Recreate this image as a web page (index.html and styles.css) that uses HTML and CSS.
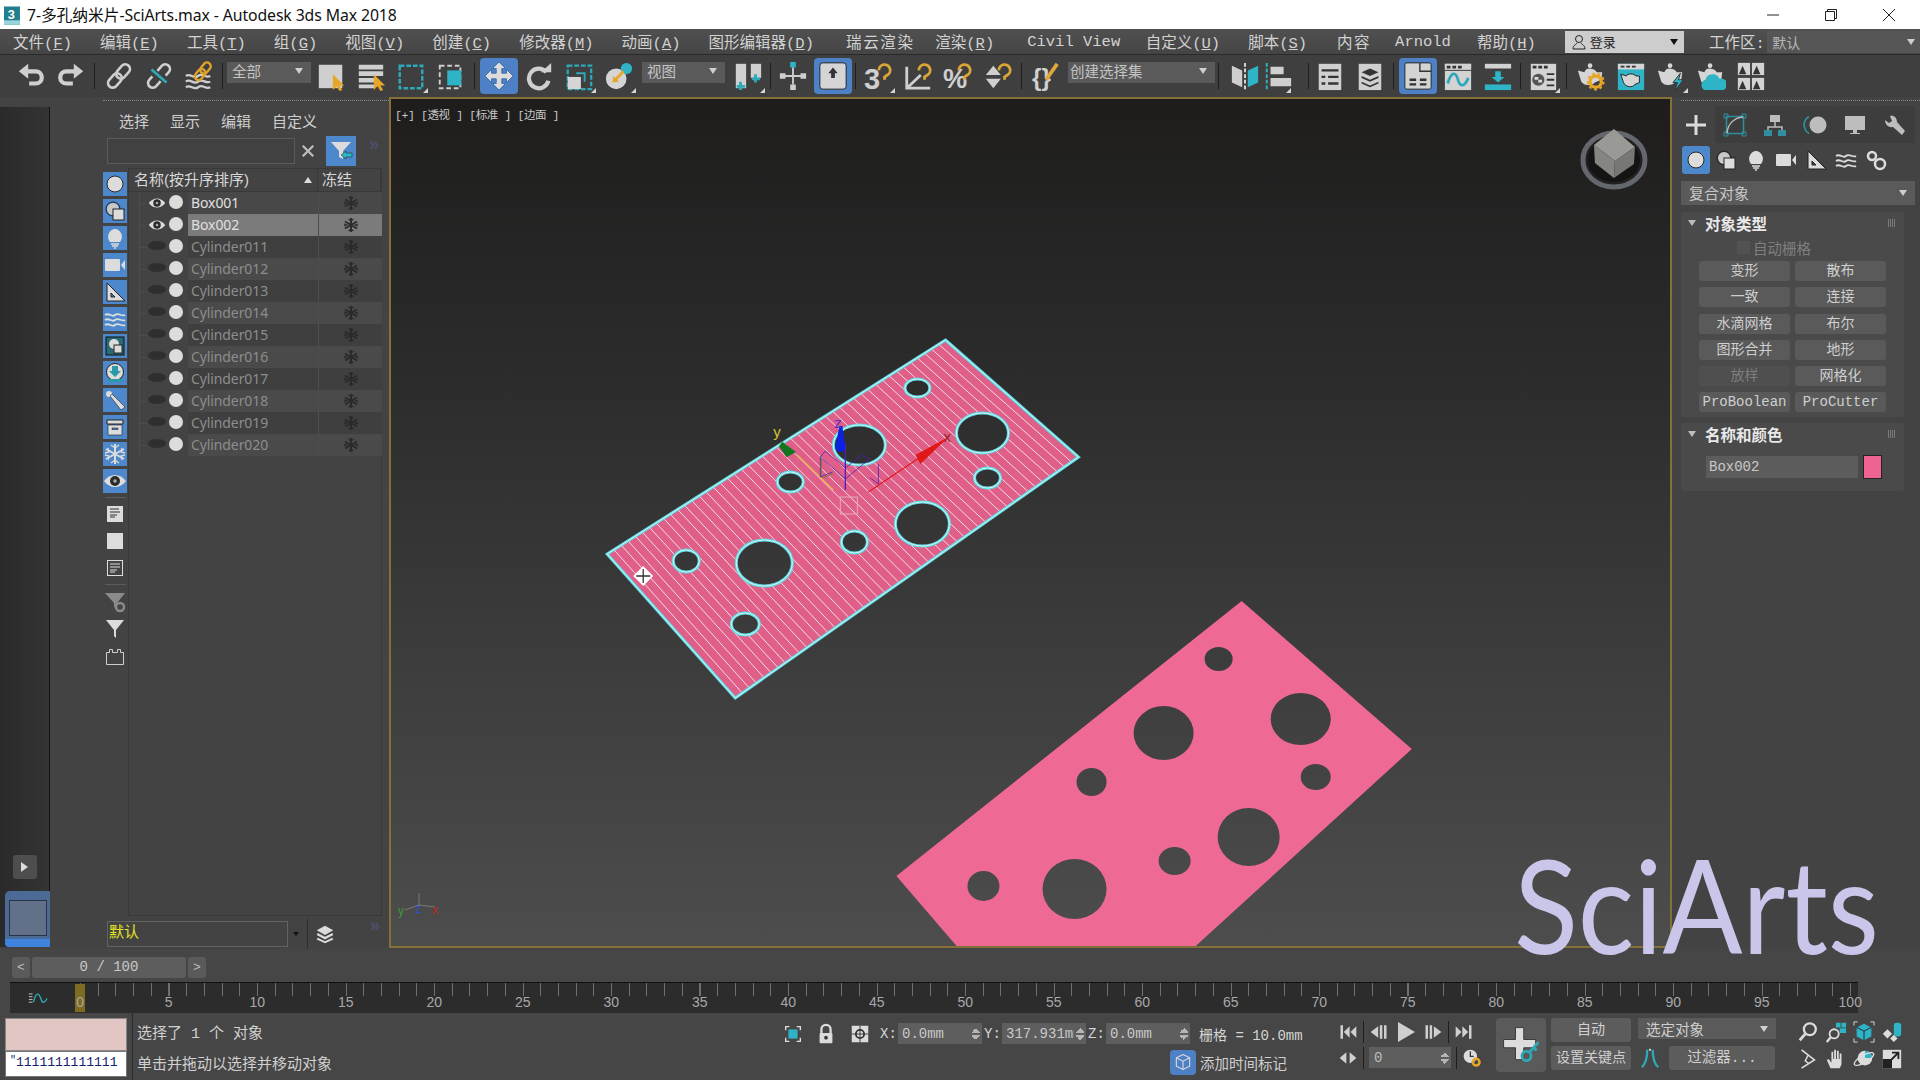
FILE: index.html
```html
<!DOCTYPE html>
<html lang="zh">
<head>
<meta charset="utf-8">
<title>7-多孔纳米片-SciArts.max - Autodesk 3ds Max 2018</title>
<link rel="stylesheet" href="styles.css">
</head>
<body>
<svg class="defs" width="0" height="0">
<defs>
<symbol id="i-undo" viewBox="0 0 32 32"><path d="M10 11h11a6.500 6.500 0 0 1 0 13h-7" fill="none" stroke="#cfcfcf" stroke-width="4.500"/><path d="M13 3 3 11l10 8z" fill="#cfcfcf"/></symbol>
<symbol id="i-redo" viewBox="0 0 32 32"><g transform="matrix(-1 0 0 1 32 0)"><path d="M10 11h11a6.500 6.500 0 0 1 0 13h-7" fill="none" stroke="#cfcfcf" stroke-width="4.500"/><path d="M13 3 3 11l10 8z" fill="#cfcfcf"/></g></symbol>
<symbol id="i-link" viewBox="0 0 32 32"><g transform="rotate(-48 16 16)" fill="none" stroke="#cfcfcf" stroke-width="2.800"><rect x="1" y="11" width="17" height="10" rx="5"/><rect x="14" y="11" width="17" height="10" rx="5"/></g></symbol>
<symbol id="i-unlink" viewBox="0 0 32 32"><g transform="rotate(-48 16 16)" fill="none" stroke="#cfcfcf" stroke-width="2.800"><path d="M11 11H6a5 5 0 0 0 0 10h7"/><path d="M21 21h5a5 5 0 0 0 0-10H19"/></g><path d="M8 9l16 14" stroke="#2ea9b9" stroke-width="3"/></symbol>
<symbol id="i-bind" viewBox="0 0 32 32"><g fill="none" stroke="#cfcfcf" stroke-width="2.400"><path d="M2 16c5-4 8 4 13 0s8 3 13 0"/><path d="M2 22c5-4 8 4 13 0s8 3 13 0"/><path d="M2 28c5-4 8 4 13 0s8 3 13 0"/></g><g transform="rotate(-50 20 11)" fill="none" stroke="#dca22c" stroke-width="2.600"><rect x="9" y="7" width="13" height="8" rx="4"/><rect x="18" y="7" width="13" height="8" rx="4"/></g></symbol>
<symbol id="i-sel" viewBox="0 0 32 32"><rect x="3" y="4" width="25" height="25" fill="#cfcfcf"/><path d="M18 14v17l4-4 3 5 3-1-3-5h5z" fill="#e8a626"/></symbol>
<symbol id="i-selname" viewBox="0 0 32 32"><path d="M3 4h26v5H3zM3 11h26v5H3zM3 18h17v5H3zM3 25h17v4H3z" fill="#cfcfcf"/><path d="M19 14v17l4-4 3 5 3-1-3-5h5z" fill="#e8a626"/></symbol>
<symbol id="i-rect" viewBox="0 0 32 32"><rect x="4" y="5" width="24" height="24" fill="none" stroke="#2ea9b9" stroke-width="2.600" stroke-dasharray="5 2"/></symbol>
<symbol id="i-win" viewBox="0 0 32 32"><rect x="4" y="5" width="22" height="24" fill="none" stroke="#cfcfcf" stroke-width="2" stroke-dasharray="5 3"/><rect x="12" y="10" width="15" height="16" fill="#2eb4c6"/></symbol>
<symbol id="i-move" viewBox="0 0 32 32"><path d="M16 1l7 7h-4v5h5V9l7 7-7 7v-4h-5v5h4l-7 7-7-7h4v-5H8v4l-7-7 7-7v4h5V8H9z" fill="#dcdcdc" stroke="#3d6ea8" stroke-width="1"/></symbol>
<symbol id="i-rot" viewBox="0 0 32 32"><path d="M24 12a10.500 10.500 0 1 0 2 9" fill="none" stroke="#cfcfcf" stroke-width="4.500"/><path d="M18 12h11V2z" fill="#cfcfcf"/></symbol>
<symbol id="i-scale" viewBox="0 0 32 32"><rect x="4" y="5" width="25" height="25" fill="none" stroke="#2ea9b9" stroke-width="2.400" stroke-dasharray="5 2"/><path d="M13 13h9v9" fill="none" stroke="#2ea9b9" stroke-width="2"/><rect x="4" y="17" width="14" height="13" fill="#d5d5d5"/></symbol>
<symbol id="i-place" viewBox="0 0 32 32"><circle cx="13" cy="19" r="11" fill="#d5d5d5"/><circle cx="24" cy="8" r="6" fill="#2eb4c6"/><path d="M21 11 12 20" stroke="#e8a626" stroke-width="3"/><path d="M9 23l1-7 6 6z" fill="#e8a626"/></symbol>
<symbol id="i-pivot" viewBox="0 0 32 32"><rect x="3" y="3" width="11" height="26" fill="#d0d0d0"/><rect x="19" y="3" width="11" height="15" fill="#d0d0d0"/><path d="M8 22v9M4 27h9M24 14v9M20 19h9" stroke="#2ea9b9" stroke-width="3"/></symbol>
<symbol id="i-manip" viewBox="0 0 32 32"><rect x="13" y="1" width="6" height="6" fill="#2eb4c6"/><rect x="15" y="7" width="2" height="18" fill="#cfcfcf"/><path d="M2 13h6v6H2zM24 13h6v6h-6zM13 25h6v6h-6zM8 15h16v2H8z" fill="#cfcfcf"/></symbol>
<symbol id="i-kbd" viewBox="0 0 32 32"><rect x="2" y="2" width="28" height="28" rx="3" fill="#d5d5d5" stroke="#222" stroke-width="1"/><path d="M11 13l5-6 5 6h-3v5h-4v-5z" fill="#333"/></symbol>
<symbol id="i-snap" viewBox="0 0 32 32"><text x="1" y="30" class="ictxt" font-size="31">3</text><path d="M17 10a6 6 0 1 1 9 5l-3 2v3" fill="none" stroke="#d9a636" stroke-width="3"/></symbol>
<symbol id="i-ang" viewBox="0 0 32 32"><path d="M4 6v23h25M4 29l15-14" fill="none" stroke="#cfcfcf" stroke-width="3"/><path d="M17 10a6 6 0 1 1 9 5l-3 2v3" fill="none" stroke="#d9a636" stroke-width="3"/></symbol>
<symbol id="i-pct" viewBox="0 0 32 32"><text x="0" y="29" class="ictxt" font-size="29">%</text><path d="M17 10a6 6 0 1 1 9 5l-3 2v3" fill="none" stroke="#d9a636" stroke-width="3"/></symbol>
<symbol id="i-spin" viewBox="0 0 32 32"><path d="M3 15l8-10 8 10zM3 19h16l-8 10z" fill="#cfcfcf"/><path d="M17 10a6 6 0 1 1 9 5l-3 2v3" fill="none" stroke="#d9a636" stroke-width="3"/></symbol>
<symbol id="i-braces" viewBox="0 0 32 32"><text x="1" y="27" class="ictxt" font-size="26">{}</text><path d="M16 20 28 3" stroke="#e0a83a" stroke-width="4"/></symbol>
<symbol id="i-mirror" viewBox="0 0 32 32"><path d="M2 5l11 5v18L2 23z" fill="#cfcfcf"/><path d="M16 2v28" stroke="#ddd" stroke-width="2" stroke-dasharray="4 2"/><path d="M30 5l-11 5v18l11-5z" fill="#2eb4c6"/></symbol>
<symbol id="i-align" viewBox="0 0 32 32"><path d="M4 2v28" stroke="#2eb4c6" stroke-width="2" stroke-dasharray="4 2"/><path d="M8 6h14v8H8zM8 18h22v9H8z" fill="#cfcfcf"/></symbol>
<symbol id="i-list" viewBox="0 0 32 32"><rect x="4" y="3" width="24" height="28" fill="#cfcfcf"/><path d="M7 10h18M7 17h4M14 17h11M7 24h4M14 24h11M7 10h4" stroke="#333" stroke-width="2.500"/></symbol>
<symbol id="i-layers" viewBox="0 0 32 32"><rect x="4" y="3" width="24" height="28" fill="#cfcfcf"/><path d="M16 8l9 4-9 4-9-4zM7 16l9 4 9-4v2l-9 4-9-4zM7 22l9 4 9-4v2l-9 4-9-4z" fill="#333"/></symbol>
<symbol id="i-ribbon" viewBox="0 0 32 32"><rect x="2" y="2" width="28" height="28" rx="2" fill="#d3d3d3" stroke="#222"/><path d="M18 2v9h12" fill="none" stroke="#333" stroke-width="1.500"/><path d="M7 20h7M18 20h7M7 25h7M18 25h7" stroke="#333" stroke-width="2.500"/></symbol>
<symbol id="i-curve" viewBox="0 0 32 32"><rect x="2" y="3" width="28" height="28" fill="#d3d3d3"/><rect x="2" y="3" width="28" height="6" fill="#d3d3d3"/><path d="M4 5h4v3H4zM10 5h4v3h-4zM16 5h4v3h-4z" fill="#333"/><path d="M2 10h28" stroke="#333"/><path d="M5 24c4-14 9-12 11-4s7 8 11-2" fill="none" stroke="#2ea9b9" stroke-width="3"/></symbol>
<symbol id="i-dope" viewBox="0 0 32 32"><rect x="2" y="3" width="28" height="5" fill="#d3d3d3"/><rect x="2" y="25" width="28" height="6" fill="#2eb4c6"/><path d="M13 11h6v6h4l-7 6-7-6h4z" fill="#2eb4c6"/></symbol>
<symbol id="i-mat" viewBox="0 0 32 32"><rect x="3" y="3" width="27" height="28" fill="#d3d3d3"/><path d="M5 5h4v3H5zM11 5h4v3h-4zM17 5h4v3h-4z" fill="#333"/><circle cx="11" cy="20" r="6.500" fill="#555"/><path d="M7 17h4v3H7zM11 20h4v3h-4z" fill="#ddd"/><path d="M20 14h8M20 20h8M20 26h8" stroke="#333" stroke-width="2"/></symbol>
<symbol id="i-tea1" viewBox="0 0 32 32"><path d="M2 10l7 2c1-3 3-4 5-4s7 1 8 4h6l-1 8-7 3c-2 4-14 4-15-3z" fill="#d5d5d5"/><circle cx="15" cy="5" r="2.500" fill="#d5d5d5"/><circle cx="21" cy="22" r="6" fill="none" stroke="#e8a626" stroke-width="3.500"/><circle cx="21" cy="22" r="8.500" fill="none" stroke="#e8a626" stroke-width="2" stroke-dasharray="3 3"/></symbol>
<symbol id="i-tea2" viewBox="0 0 32 32"><rect x="2" y="3" width="28" height="28" fill="#2eb4c6"/><rect x="2" y="3" width="28" height="6" fill="#d3d3d3"/><path d="M5 5h4v2H5zM11 5h4v2h-4zM17 5h4v2h-4z" fill="#333"/><path d="M5 14l6 2c1-3 9-3 10 0h4v7l-5 2c-2 4-10 3-12-2z" fill="#d5d5d5" stroke="#222"/></symbol>
<symbol id="i-tea3" viewBox="0 0 32 32"><path d="M2 10l7 2c1-3 3-4 5-4s7 1 8 4h6l-1 8-7 3c-2 4-14 4-15-3z" fill="#d5d5d5"/><circle cx="15" cy="5" r="2.500" fill="#d5d5d5"/><path d="M26 13l-8 10h5l-3 9 9-12h-5z" fill="#2eb4c6" stroke="#333"/></symbol>
<symbol id="i-tea4" viewBox="0 0 32 32"><path d="M2 10l7 2c1-3 3-4 5-4s7 1 8 4h6l-1 8-7 3c-2 4-14 4-15-3z" fill="#d5d5d5"/><circle cx="15" cy="5" r="2.500" fill="#d5d5d5"/><path d="M9 31a6 6 0 0 1 1-11 8 8 0 0 1 15-1 6 6 0 0 1 4 12z" fill="#2eb4c6"/></symbol>
<symbol id="i-grid4" viewBox="0 0 32 32"><rect x="2" y="2" width="13" height="13" fill="#d3d3d3"/><rect x="17" y="2" width="13" height="13" fill="#d3d3d3"/><rect x="2" y="18" width="13" height="13" fill="#d3d3d3"/><rect x="17" y="18" width="13" height="13" fill="#d3d3d3"/><path d="M3 14l4-9 4 9zM18 14l4-9 4 9zM3 30l4-9 4 9zM18 30l4-9 4 9z" fill="#333"/></symbol>
<symbol id="s-sphere" viewBox="0 0 24 24"><circle cx="12" cy="12" r="8" fill="#dcdcdc" stroke="#2a2a2a" stroke-width="1"/></symbol>
<symbol id="s-shape" viewBox="0 0 24 24"><circle cx="10" cy="10" r="7" fill="none" stroke="#222" stroke-width="1"/><circle cx="10" cy="10" r="6" fill="#c8c8c8"/><rect x="10" y="10" width="11" height="11" fill="#dcdcdc" stroke="#222"/></symbol>
<symbol id="s-bulb" viewBox="0 0 24 24"><path d="M7 16c-5-7 1-13 5-13s10 6 5 13z" fill="#dcdcdc"/><path d="M8 18h8M9 20h6M11 22h2" stroke="#dcdcdc" stroke-width="1.500"/></symbol>
<symbol id="s-cam" viewBox="0 0 24 24"><rect x="2" y="6" width="15" height="12" rx="1" fill="#dcdcdc"/><path d="M18 12l4-5v10z" fill="#dcdcdc"/></symbol>
<symbol id="s-ruler" viewBox="0 0 24 24"><path d="M4 3v18h18zM8 13v4h4z" fill="#dcdcdc" fill-rule="evenodd" stroke="#222" stroke-width="1"/></symbol>
<symbol id="s-wave" viewBox="0 0 24 24"><g fill="none" stroke="#dcdcdc" stroke-width="1.800"><path d="M2 8c4-3 7 3 10 0s7 2 10 0"/><path d="M2 13c4-3 7 3 10 0s7 2 10 0"/><path d="M2 18c4-3 7 3 10 0s7 2 10 0"/></g></symbol>
<symbol id="s-gears" viewBox="0 0 24 24"><g fill="none" stroke="#dcdcdc" stroke-width="2.500"><circle cx="8" cy="8" r="4"/><circle cx="16" cy="16" r="5"/></g></symbol>
<symbol id="s-xref" viewBox="0 0 24 24"><rect x="3" y="3" width="18" height="18" fill="#2a6a75" stroke="#111"/><circle cx="11" cy="10" r="5" fill="#dcdcdc"/><rect x="11" y="11" width="8" height="8" fill="#dcdcdc" stroke="#222"/></symbol>
<symbol id="s-down" viewBox="0 0 24 24"><circle cx="12" cy="11" r="8.500" fill="#dcdcdc" stroke="#222"/><path d="M9 5h6v5h3l-6 6-6-6h3z" fill="#2a9aa8"/><path d="M5 18h14v3H5z" fill="#2a9aa8"/></symbol>
<symbol id="s-pin" viewBox="0 0 24 24"><circle cx="6" cy="6" r="3" fill="#dcdcdc"/><path d="M7 8l11 14 4-3L9 6z" fill="#dcdcdc" stroke="#222" stroke-width=".6"/></symbol>
<symbol id="s-box" viewBox="0 0 24 24"><path d="M4 5h16v4H4z" fill="#dcdcdc" stroke="#222"/><path d="M5 10h14v10H5zM9 13h6v1.500H9z" fill="#dcdcdc" fill-rule="evenodd" stroke="#222" stroke-width=".6"/></symbol>
<symbol id="s-snow" viewBox="0 0 24 24"><g stroke="#dcdcdc" stroke-width="2"><path d="M12 2v20M3 7l18 10M21 7 3 17"/></g><g stroke="#dcdcdc" stroke-width="1.300" fill="none"><path d="M8 3l4 3 4-3M8 21l4-3 4 3M2 11l4-1-1-4M22 11l-4-1 1-4M2 13l4 1-1 4M22 13l-4 1 1 4"/></g></symbol>
<symbol id="s-eye" viewBox="0 0 24 24"><path d="M1 12c6-8 16-8 22 0-6 8-16 8-22 0z" fill="#dcdcdc"/><circle cx="12" cy="12" r="5" fill="#2b2b2b"/><circle cx="12" cy="12" r="1.800" fill="#aaa"/></symbol>
<symbol id="s-frz" viewBox="0 0 16 16"><g stroke="currentColor" stroke-width="1.900" fill="none"><path d="M8 1v14M2 4.500l12 7M14 4.500l-12 7"/></g><g stroke="currentColor" stroke-width="1.100" fill="none"><path d="M5.500 2 8 4l2.500-2M5.500 14 8 12l2.500 2M1 7l3 1-3 1M15 7l-3 1 3 1"/></g></symbol>
<symbol id="s-doc" viewBox="0 0 24 24"><rect x="4" y="4" width="16" height="16" fill="#dcdcdc"/><path d="M7 7h9M7 10h10M7 13h7M7 15h5" stroke="#333" stroke-width="1"/></symbol>
<symbol id="s-docb" viewBox="0 0 24 24"><rect x="4" y="4" width="16" height="16" fill="#dcdcdc"/></symbol>
<symbol id="s-doco" viewBox="0 0 24 24"><rect x="4.500" y="4.500" width="15" height="15" fill="none" stroke="#dcdcdc"/><path d="M7 8h10M7 11h10M7 14h7M7 16h5" stroke="#dcdcdc" stroke-width="1"/></symbol>
<symbol id="s-filg" viewBox="0 0 24 24"><path d="M2 4h20l-8 10v6l-3-2v-4z" fill="#8a8a8a"/><circle cx="17" cy="18" r="4" fill="none" stroke="#8a8a8a" stroke-width="2.500"/></symbol>
<symbol id="s-fil" viewBox="0 0 24 24"><path d="M3 4h18l-8 10v8l-2-2v-6z" fill="#dcdcdc"/></symbol>
<symbol id="s-brick" viewBox="0 0 24 24"><path d="M3.500 9.500h3v-3h3v3h5v-3h3v3h3v12h-17z" fill="none" stroke="#cfcfcf"/></symbol>
<symbol id="s-filb" viewBox="0 0 24 24"><path d="M2 3h20l-8 9v8l-4-2v-6z" fill="#dcdcdc"/><path d="M12 16l5-4v2h6v4h-6v2z" fill="#2eb4c6" stroke="#222" stroke-width=".5"/></symbol>
<symbol id="s-layers" viewBox="0 0 24 24"><path d="M12 3l9 5-9 5-9-5zM4 11l8 4 8-4 1 2-9 5-9-5zM4 16l8 4 8-4 1 2-9 4-9-4z" fill="#dcdcdc"/></symbol>
<symbol id="t-plus" viewBox="0 0 24 24"><path d="M10.500 2h3v8.500H22v3h-8.500V22h-3v-8.500H2v-3h8.500z" fill="#dcdcdc"/></symbol>
<symbol id="t-mod" viewBox="0 0 24 24"><rect x="3.500" y="3.500" width="17" height="17" fill="none" stroke="#2f8f9f" stroke-width="1.500"/><path d="M1 1h4v4H1zM19 1h4v4h-4zM1 19h4v4H1zM19 19h4v4h-4z" fill="none" stroke="#2f8f9f"/><path d="M4 20C5 10 12 5 20 4" fill="none" stroke="#bbb" stroke-width="1.500"/></symbol>
<symbol id="t-hier" viewBox="0 0 24 24"><rect x="7" y="2" width="10" height="7" fill="#bdbdbd"/><path d="M12 9v5M5 19v-5h14v5" fill="none" stroke="#bdbdbd" stroke-width="1.500"/><rect x="1" y="17" width="8" height="6" fill="#2f8f9f"/><rect x="15" y="17" width="8" height="6" fill="#2f8f9f"/></symbol>
<symbol id="t-mot" viewBox="0 0 24 24"><circle cx="15" cy="12" r="8.500" fill="#bdbdbd"/><path d="M6 3.500a10 10 0 0 0 0 17M3 6a10 10 0 0 0 0 12" fill="none" stroke="#2f8f9f" stroke-width="1.500"/></symbol>
<symbol id="t-disp" viewBox="0 0 24 24"><rect x="2" y="3" width="20" height="14" fill="#bdbdbd"/><path d="M10 17h4v3h3v1H7v-1h3z" fill="#bdbdbd"/></symbol>
<symbol id="t-wr" viewBox="0 0 24 24"><path d="M2 7l4 3 3-2-2-5c4-1 7 2 7 6l8 9-3 4-9-8c-5 1-8-3-8-7z" fill="#bdbdbd"/></symbol>
<symbol id="p-first" viewBox="0 0 24 24"><path d="M3 4h3v16H3zM14 5v14l-7-7zM22 5v14l-7-7z" fill="#cfcfcf"/></symbol>
<symbol id="p-prev" viewBox="0 0 24 24"><path d="M11 5v14l-9-7zM13 4h3v16h-3zM18 4h3v16h-3z" fill="#cfcfcf"/></symbol>
<symbol id="p-play" viewBox="0 0 24 24"><path d="M4 2l17 10L4 22z" fill="#cfcfcf"/></symbol>
<symbol id="p-next" viewBox="0 0 24 24"><path d="M13 5v14l9-7zM3 4h3v16H3zM8 4h3v16H8z" fill="#cfcfcf"/></symbol>
<symbol id="p-last" viewBox="0 0 24 24"><path d="M21 4h-3v16h3zM10 5v14l7-7zM2 5v14l7-7z" fill="#cfcfcf"/></symbol>
<symbol id="p-keym" viewBox="0 0 24 24"><path d="M10 5v14l-8-7zM14 5v14l8-7z" fill="#cfcfcf"/></symbol>
<symbol id="p-clock" viewBox="0 0 24 24"><circle cx="10" cy="10" r="8" fill="#dcdcdc"/><path d="M10 4v6h4" fill="none" stroke="#333" stroke-width="1.500"/><circle cx="17" cy="17" r="4" fill="none" stroke="#e8a626" stroke-width="3"/></symbol>
<symbol id="p-key" viewBox="0 0 48 48"><path d="M18 5h9v13h13v9H27v13h-9V27H5v-9h13z" fill="#dcdcdc" stroke="#333"/><circle cx="30" cy="36" r="5" fill="none" stroke="#2ea9b9" stroke-width="3"/><path d="M33 32 43 21M38 27l3 3" stroke="#2ea9b9" stroke-width="3"/></symbol>
<symbol id="p-tan" viewBox="0 0 24 24"><path d="M9 3C9 12 8 18 3 22M15 3c0 9 1 15 6 19" fill="none" stroke="#2ea9b9" stroke-width="2.500"/><path d="M11 2h2v2h-2z" fill="#ddd"/></symbol>
<symbol id="n-zoom" viewBox="0 0 24 24"><circle cx="14" cy="9" r="6.500" fill="none" stroke="#dcdcdc" stroke-width="2.500"/><path d="M9 14 3 21" stroke="#dcdcdc" stroke-width="3"/></symbol>
<symbol id="n-zooma" viewBox="0 0 24 24"><circle cx="10" cy="14" r="5" fill="none" stroke="#dcdcdc" stroke-width="2"/><path d="M6 18l-4 5" stroke="#dcdcdc" stroke-width="2.500"/><path d="M12 2h5v5h-5zM18 2h5v5h-5zM16 8h7v5h-7z" fill="#2eb4c6"/></symbol>
<symbol id="n-ext" viewBox="0 0 24 24"><path d="M12 3l8 4v10l-8 4-8-4V7z" fill="#2eb4c6"/><path d="M4 7l8 4 8-4M12 11v10" stroke="#222" fill="none"/><path d="M1 5V1h4M19 1h4v4M1 19v4h4M19 23h4v-4" fill="none" stroke="#ddd"/></symbol>
<symbol id="n-exta" viewBox="0 0 24 24"><path d="M2 14l5-5 5 5-5 5zM10 19l4-4 4 4-4 4z" fill="#dcdcdc"/><rect x="14" y="2" width="8" height="15" rx="3" fill="#2eb4c6"/></symbol>
<symbol id="n-fov" viewBox="0 0 24 24"><path d="M5 2l14 11L5 22" fill="none" stroke="#dcdcdc" stroke-width="1.800"/><path d="M12 8l-3 6 4 3" fill="none" stroke="#dcdcdc" stroke-width="1.500"/></symbol>
<symbol id="n-hand" viewBox="0 0 24 24"><path d="M6 22l-4-9 2-1 3 4V4h2v8h1V2h2v10h1V3h2v9h1V6h2v12l-2 4z" fill="#dcdcdc"/></symbol>
<symbol id="n-orbit" viewBox="0 0 24 24"><circle cx="13" cy="11" r="8" fill="#dcdcdc"/><path d="M13 3v8h8a8 8 0 0 0-8-8z" fill="#2eb4c6"/><ellipse cx="12" cy="12" rx="12" ry="4" transform="rotate(-30 12 12)" fill="none" stroke="#dcdcdc" stroke-width="1.500"/></symbol>
<symbol id="n-max" viewBox="0 0 24 24"><rect x="2" y="2" width="20" height="20" fill="#dcdcdc"/><path d="M2 12h10v10H2z" fill="#222"/><path d="M10 14l8-8M12 5h7v7" fill="none" stroke="#222" stroke-width="2"/></symbol>
<symbol id="c-sel" viewBox="0 0 24 24"><path d="M4 8V4h4M16 4h4v4M4 16v4h4M20 16v4h-4" fill="none" stroke="#ddd" stroke-width="1.500"/><rect x="7" y="7" width="10" height="10" fill="#2eb4c6"/></symbol>
<symbol id="c-lock" viewBox="0 0 24 24"><path d="M7 11V7a5 5 0 0 1 10 0v4" fill="none" stroke="#dcdcdc" stroke-width="2.500"/><rect x="5" y="11" width="14" height="11" rx="1" fill="#dcdcdc"/><circle cx="12" cy="16" r="2" fill="#333"/></symbol>
<symbol id="c-abs" viewBox="0 0 24 24"><rect x="3" y="3" width="18" height="18" fill="#dcdcdc"/><circle cx="12" cy="12" r="4.500" fill="none" stroke="#333" stroke-width="2"/><path d="M12 3v18M3 12h18" stroke="#333"/></symbol>
<symbol id="c-tag" viewBox="0 0 24 24"><path d="M12 3l8 4v10l-8 4-8-4V7z" fill="none" stroke="#ddd" stroke-width="1.300"/><path d="M4 7l8 4 8-4M12 11v10" fill="none" stroke="#ddd" stroke-width="1.300"/></symbol>
</defs>
</svg>

<div class="app">
  <header class="title">
    <svg class="appicon" viewBox="0 0 16 18"><rect width="15" height="17" y="1" fill="#1f7f8e"/><rect width="15" height="4" y="14" fill="#9ad4dc"/><text x="3.500" y="12.500" class="appthree">3</text></svg>
    <span class="title-t">7-多孔纳米片-SciArts.max - Autodesk 3ds Max 2018</span>
    <div class="winctl">
      <span class="wc"><svg viewBox="0 0 12 12"><path d="M0 6h12" stroke="#222"/></svg></span>
      <span class="wc"><svg viewBox="0 0 12 12"><path d="M2.500 2.500V.5h9v9h-2M.5 2.500h9v9h-9z" fill="none" stroke="#222"/></svg></span>
      <span class="wc"><svg viewBox="0 0 12 12"><path d="M0 0l12 12M12 0 0 12" stroke="#222"/></svg></span>
    </div>
  </header>

  <nav class="menu">
    <span>文件(<u>F</u>)</span><span>编辑(<u>E</u>)</span><span>工具(<u>T</u>)</span><span>组(<u>G</u>)</span><span>视图(<u>V</u>)</span><span>创建(<u>C</u>)</span><span>修改器(<u>M</u>)</span><span>动画(<u>A</u>)</span><span>图形编辑器(<u>D</u>)</span><span class="wide4">瑞云渲染</span><span class="ml6">渲染(<u>R</u>)</span><span class="civ">Civil View</span><span class="cust">自定义(<u>U</u>)</span><span>脚本(<u>S</u>)</span><span class="wide2">内容</span><span class="arn">Arnold</span><span class="arn2">帮助(<u>H</u>)</span>
    <div class="login"><svg viewBox="0 0 16 16"><circle cx="8" cy="5" r="3.500" fill="none" stroke="#222"/><path d="M2 15c0-4 3-4 4-6M14 15c0-4-3-4-4-6M2 15h12" fill="none" stroke="#222"/></svg><span>登录</span><i class="tri dark"></i></div>
    <span class="ws">工作区:</span>
    <div class="wsd"><span>默认</span><i class="tri"></i></div>
  </nav>

  <div class="tools">
    <span class="slot"><svg class="ic"><use href="#i-undo"/></svg></span>
    <span class="slot"><svg class="ic"><use href="#i-redo"/></svg></span>
    <i class="sep"></i>
    <span class="slot"><svg class="ic"><use href="#i-link"/></svg></span>
    <span class="slot"><svg class="ic"><use href="#i-unlink"/></svg></span>
    <span class="slot"><svg class="ic"><use href="#i-bind"/></svg></span>
    <i class="sep"></i>
    <div class="dd w84"><span>全部</span><i class="tri"></i></div>
    <span class="slot"><svg class="ic"><use href="#i-sel"/></svg></span>
    <span class="slot"><svg class="ic"><use href="#i-selname"/></svg></span>
    <span class="slot fly"><svg class="ic"><use href="#i-rect"/></svg></span>
    <span class="slot"><svg class="ic"><use href="#i-win"/></svg></span>
    <i class="sep"></i>
    <span class="slot on"><svg class="ic"><use href="#i-move"/></svg></span>
    <span class="slot"><svg class="ic"><use href="#i-rot"/></svg></span>
    <span class="slot fly"><svg class="ic"><use href="#i-scale"/></svg></span>
    <span class="slot fly"><svg class="ic"><use href="#i-place"/></svg></span>
    <div class="dd w83 ml3"><span>视图</span><i class="tri"></i></div>
    <span class="slot fly ml3"><svg class="ic"><use href="#i-pivot"/></svg></span>
    <i class="sep t"></i>
    <span class="slot"><svg class="ic"><use href="#i-manip"/></svg></span>
    <span class="slot on"><svg class="ic"><use href="#i-kbd"/></svg></span>
    <i class="sep t"></i>
    <span class="slot fly"><svg class="ic"><use href="#i-snap"/></svg></span>
    <span class="slot"><svg class="ic"><use href="#i-ang"/></svg></span>
    <span class="slot"><svg class="ic"><use href="#i-pct"/></svg></span>
    <span class="slot"><svg class="ic"><use href="#i-spin"/></svg></span>
    <i class="sep"></i>
    <span class="slot"><svg class="ic"><use href="#i-braces"/></svg></span>
    <div class="dd w147 ml2"><span>创建选择集</span><i class="tri"></i></div>
    <i class="sep"></i>
    <span class="slot n ml5"><svg class="ic"><use href="#i-mirror"/></svg></span>
    <span class="slot n fly"><svg class="ic"><use href="#i-align"/></svg></span>
    <i class="sep ml14"></i>
    <span class="slot"><svg class="ic"><use href="#i-list"/></svg></span>
    <span class="slot"><svg class="ic"><use href="#i-layers"/></svg></span>
    <i class="sep"></i>
    <span class="slot on"><svg class="ic"><use href="#i-ribbon"/></svg></span>
    <span class="slot"><svg class="ic"><use href="#i-curve"/></svg></span>
    <span class="slot"><svg class="ic"><use href="#i-dope"/></svg></span>
    <i class="sep t"></i>
    <span class="slot fly"><svg class="ic"><use href="#i-mat"/></svg></span>
    <i class="sep"></i>
    <span class="slot"><svg class="ic"><use href="#i-tea1"/></svg></span>
    <span class="slot"><svg class="ic"><use href="#i-tea2"/></svg></span>
    <span class="slot fly"><svg class="ic"><use href="#i-tea3"/></svg></span>
    <span class="slot"><svg class="ic"><use href="#i-tea4"/></svg></span>
    <span class="slot"><svg class="ic"><use href="#i-grid4"/></svg></span>
  </div>

  <main class="main">
    <aside class="strip">
      <div class="strip-fill"></div>
      <span class="playbtn"><i></i></span>
      <div class="tile"><div></div></div>
    </aside>

    <section class="scene">
      <div class="dots"></div>
      <div class="sc-menu"><span>选择</span><span>显示</span><span>编辑</span><span>自定义</span></div>
      <div class="sc-search">
        <div class="sbox"></div>
        <svg class="xic" viewBox="0 0 16 16"><path d="M2 2l12 12M14 2 2 14" stroke="#bdbdbd" stroke-width="2.600"/></svg>
        <span class="filt"><svg viewBox="0 0 24 24"><use href="#s-filb"/></svg></span>
        <span class="chev">»</span>
      </div>
      <div class="sc-body">
        <div class="sc-side">
          <span class="b"><svg><use href="#s-sphere"/></svg></span>
          <span class="b"><svg><use href="#s-shape"/></svg></span>
          <span class="b"><svg><use href="#s-bulb"/></svg></span>
          <span class="b"><svg><use href="#s-cam"/></svg></span>
          <span class="b"><svg><use href="#s-ruler"/></svg></span>
          <span class="b"><svg><use href="#s-wave"/></svg></span>
          <span class="b"><svg><use href="#s-xref"/></svg></span>
          <span class="b"><svg><use href="#s-down"/></svg></span>
          <span class="b"><svg><use href="#s-pin"/></svg></span>
          <span class="b"><svg><use href="#s-box"/></svg></span>
          <span class="b"><svg><use href="#s-snow"/></svg></span>
          <span class="b"><svg><use href="#s-eye"/></svg></span>
          <i class="hr"></i>
          <span><svg><use href="#s-doc"/></svg></span>
          <span><svg><use href="#s-docb"/></svg></span>
          <span><svg><use href="#s-doco"/></svg></span>
          <i class="hr"></i>
          <span><svg><use href="#s-filg"/></svg></span>
          <span><svg><use href="#s-fil"/></svg></span>
          <span><svg><use href="#s-brick"/></svg></span>
        </div>
        <div class="tbl">
          <div class="th"><span class="th-n">名称(按升序排序)</span><i class="up"></i><span class="th-f">冻结</span></div>
          <div class="row vis"><i class="tree"></i><svg class="eye"><use href="#s-eye"/></svg><i class="dot"></i><span class="nm">Box001</span><span class="fz"><svg><use href="#s-frz"/></svg></span></div>
          <div class="row vis sel"><i class="tree"></i><svg class="eye"><use href="#s-eye"/></svg><i class="dot"></i><span class="nm">Box002</span><span class="fz"><svg><use href="#s-frz"/></svg></span></div>
          <div class="row"><i class="tree"></i><i class="eyeoff"></i><i class="dot"></i><span class="nm">Cylinder011</span><span class="fz"><svg><use href="#s-frz"/></svg></span></div>
          <div class="row alt"><i class="tree"></i><i class="eyeoff"></i><i class="dot"></i><span class="nm">Cylinder012</span><span class="fz"><svg><use href="#s-frz"/></svg></span></div>
          <div class="row"><i class="tree"></i><i class="eyeoff"></i><i class="dot"></i><span class="nm">Cylinder013</span><span class="fz"><svg><use href="#s-frz"/></svg></span></div>
          <div class="row alt"><i class="tree"></i><i class="eyeoff"></i><i class="dot"></i><span class="nm">Cylinder014</span><span class="fz"><svg><use href="#s-frz"/></svg></span></div>
          <div class="row"><i class="tree"></i><i class="eyeoff"></i><i class="dot"></i><span class="nm">Cylinder015</span><span class="fz"><svg><use href="#s-frz"/></svg></span></div>
          <div class="row alt"><i class="tree"></i><i class="eyeoff"></i><i class="dot"></i><span class="nm">Cylinder016</span><span class="fz"><svg><use href="#s-frz"/></svg></span></div>
          <div class="row"><i class="tree"></i><i class="eyeoff"></i><i class="dot"></i><span class="nm">Cylinder017</span><span class="fz"><svg><use href="#s-frz"/></svg></span></div>
          <div class="row alt"><i class="tree"></i><i class="eyeoff"></i><i class="dot"></i><span class="nm">Cylinder018</span><span class="fz"><svg><use href="#s-frz"/></svg></span></div>
          <div class="row"><i class="tree"></i><i class="eyeoff"></i><i class="dot"></i><span class="nm">Cylinder019</span><span class="fz"><svg><use href="#s-frz"/></svg></span></div>
          <div class="row alt"><i class="tree"></i><i class="eyeoff"></i><i class="dot"></i><span class="nm">Cylinder020</span><span class="fz"><svg><use href="#s-frz"/></svg></span></div>
        </div>
      </div>
      <div class="sc-foot">
        <div class="layer">默认</div><i class="tri dark sm"></i><i class="vline"></i>
        <svg class="lay"><use href="#s-layers"/></svg>
        <span class="chev f">»</span>
      </div>
    </section>

    <section class="vp">
      <div class="vp-label">[+] [透视 ] [标准 ] [边面 ]</div>
      <svg class="scene3d" viewBox="391 99 1278 847" preserveAspectRatio="none">
        <defs>
          <path id="up-shape" fill-rule="evenodd" clip-rule="evenodd" d="M945 340 1078 457 735 698 607 554Z M904.500 388a12.500 9 0 1 0 25 0a12.500 9 0 1 0-25 0Z M956 433a26 20 0 1 0 52 0a26 20 0 1 0-52 0Z M974 478a13 10 0 1 0 26 0a13 10 0 1 0-26 0Z M833 445a26 20 0 1 0 52 0a26 20 0 1 0-52 0Z M777 482a13 10 0 1 0 26 0a13 10 0 1 0-26 0Z M895 524a27 22 0 1 0 54 0a27 22 0 1 0-54 0Z M841 542a13 11 0 1 0 26 0a13 11 0 1 0-26 0Z M736 563a28 23 0 1 0 56 0a28 23 0 1 0-56 0Z M673 561a13 11 0 1 0 26 0a13 11 0 1 0-26 0Z M731 624a14 11 0 1 0 28 0a14 11 0 1 0-28 0Z"/>
          <clipPath id="upclip"><use href="#up-shape"/></clipPath>
        </defs>
        <path class="plate-lo" fill-rule="evenodd" d="M1241 601 1411 749 1194 947 957 947 896 876Z M1204 659a14 12 0 1 0 28 0a14 12 0 1 0-28 0Z M1270 719a30 26 0 1 0 60 0a30 26 0 1 0-60 0Z M1300 777a15 13 0 1 0 30 0a15 13 0 1 0-30 0Z M1133 733a30 27 0 1 0 60 0a30 27 0 1 0-60 0Z M1076 782a15 14 0 1 0 30 0a15 14 0 1 0-30 0Z M1217 837a31 29 0 1 0 62 0a31 29 0 1 0-62 0Z M1158 861a16 14 0 1 0 32 0a16 14 0 1 0-32 0Z M1042 889a32 30 0 1 0 64 0a32 30 0 1 0-64 0Z M967 886a16 15 0 1 0 32 0a16 15 0 1 0-32 0Z"/>
        <use href="#up-shape" class="plate-up"/>
        <g clip-path="url(#upclip)"><path class="hatch" d="M614 550 742 693M621 545 749 688M628 541 756 683M635 536 764 678M642 532 771 673M649 527 778 668M656 523 785 663M663 518 792 658M670 514 799 653M677 509 807 648M684 505 814 643M691 500 821 638M699 496 828 633M706 492 835 628M713 487 842 623M720 483 849 618M727 478 857 613M734 474 864 608M741 469 871 603M748 465 878 598M755 460 885 593M762 456 892 588M769 451 899 583M776 447 907 578M783 442 914 572M790 438 921 567M797 434 928 562M804 429 935 557M811 425 942 552M818 420 950 547M825 416 957 542M832 411 964 537M839 407 971 532M846 402 978 527M853 398 985 522M860 393 992 517M867 389 1000 512M875 384 1007 507M882 380 1014 502M889 376 1021 497M896 371 1028 492M903 367 1035 487M910 362 1042 482M917 358 1050 477M924 353 1057 472M931 349 1064 467M938 344 1071 462"/></g>
        <use href="#up-shape" class="wire"/>
        <use href="#up-shape" class="wire2"/>
        <rect x="840" y="497" width="17" height="17" fill="none" stroke="#e5a9bd" stroke-width="1"/>
        <path d="M833 490 797 455" stroke="#e5b04a" stroke-width="1.300"/>
        <path d="M795 453 783 441l-4 4 6 12z" fill="#12751f" transform="rotate(-8 788 448)"/>
        <path d="M868 492 920 457" stroke="#e01818" stroke-width="1"/>
        <path d="M915 455 948 437 920 464z" fill="#e01818"/>
        <path d="M845 490V443" stroke="#4a20c0" stroke-width="1.300"/>
        <path d="M835 448a6 9 0 0 0 10 0l-3-22-3 0z" fill="#0b22e0"/>
        <path d="M820 457l25 22 24-20-8-4-16 13-20-17zM820 457v20l12 -5M878 464v20l-8 -6" fill="none" stroke="#4c1fb0" stroke-width=".8"/>
        <path d="M821 458v18M823 478l10-5" stroke="#7d7a40" fill="none"/>
        <text x="773" y="437" class="ax" fill="#d8c438">y</text>
        <text x="834" y="428" class="ax" fill="#5a2cc8">z</text>
        <text x="943" y="442" class="ax" fill="#a02020">x</text>
        <path d="M643 566l10 10-10 10-10-10z" fill="#fff"/>
        <path d="M643 569v14M636 576h14" stroke="#333" stroke-width="1.300"/>
        <g>
          <ellipse cx="1613" cy="160" rx="31" ry="27" fill="none" stroke="#64676d" stroke-width="5"/>
          <ellipse cx="1613" cy="160" rx="26" ry="22" fill="#141414"/>
          <path d="M1613 129l21 18-20 14-21-16z" fill="#999996"/>
          <path d="M1593 145l21 16-1 17-19-15z" fill="#858582"/>
          <path d="M1634 147l-20 14-1 17 20-14z" fill="#777774"/>
        </g>
        <path d="M419 905l-14 5M419 905V893M419 905l16 2" stroke="#777" fill="none"/>
        <text x="398" y="915" class="ax2" fill="#3a9a3a">y</text>
        <text x="415" y="913" class="ax2" fill="#3050d0">z</text>
        <text x="432" y="914" class="ax2" fill="#b82828">x</text>
      </svg>
    </section>

    <aside class="cmd">
      <div class="dots"></div>
      <div class="tabs">
        <span class="on"><svg><use href="#t-plus"/></svg></span>
        <span><svg><use href="#t-mod"/></svg></span>
        <span><svg><use href="#t-hier"/></svg></span>
        <span><svg><use href="#t-mot"/></svg></span>
        <span><svg><use href="#t-disp"/></svg></span>
        <span><svg><use href="#t-wr"/></svg></span>
      </div>
      <div class="subt">
        <span class="on"><svg><use href="#s-sphere"/></svg></span>
        <span><svg><use href="#s-shape"/></svg></span>
        <span><svg><use href="#s-bulb"/></svg></span>
        <span><svg><use href="#s-cam"/></svg></span>
        <span><svg><use href="#s-ruler"/></svg></span>
        <span><svg><use href="#s-wave"/></svg></span>
        <span><svg><use href="#s-gears"/></svg></span>
      </div>
      <div class="cmb"><span>复合对象</span><i class="tri"></i></div>
      <div class="roll r1">
        <div class="rh"><i class="tri sm2"></i><b>对象类型</b><em></em></div>
        <div class="auto"><i></i><span>自动栅格</span></div>
        <div class="btns">
          <span>变形</span><span>散布</span><span>一致</span><span>连接</span><span>水滴网格</span><span>布尔</span><span>图形合并</span><span>地形</span><span class="dis">放样</span><span>网格化</span><span>ProBoolean</span><span>ProCutter</span>
        </div>
      </div>
      <div class="roll r2">
        <div class="rh"><i class="tri sm2"></i><b>名称和颜色</b><em></em></div>
        <div class="namec"><div class="ninput">Box002</div><i class="swatch"></i></div>
      </div>
    </aside>
  </main>

  <footer class="bottom">
    <div class="slider">
      <span class="arrow">&lt;</span><span class="pos">0 / 100</span><span class="arrow">&gt;</span>
    </div>
    <div class="track">
      <div class="tr-ic"><svg viewBox="0 0 24 16"><path d="M2 3h4M2 6h4M2 9h4M2 12h4" stroke="#ccc"/><path d="M7 12C10 0 13 2 15 8s4 5 7 0" fill="none" stroke="#2ea9b9" stroke-width="1.500"/></svg></div>
      <div class="ruler">
        <span class="thumb"></span>
        <div class="nums"><span>0</span><span>5</span><span>10</span><span>15</span><span>20</span><span>25</span><span>30</span><span>35</span><span>40</span><span>45</span><span>50</span><span>55</span><span>60</span><span>65</span><span>70</span><span>75</span><span>80</span><span>85</span><span>90</span><span>95</span><span>100</span></div>
      </div>
    </div>
    <div class="status">
      <div class="prev"><div class="pk"></div><div class="wh"><sup>"</sup>1111111111111</div></div>
      <div class="msg"><span>选择了 1 个 对象</span><span>单击并拖动以选择并移动对象</span></div>
      <div class="coords">
        <div class="c-top">
          <svg class="c1"><use href="#c-sel"/></svg>
          <svg class="c2"><use href="#c-lock"/></svg>
          <svg class="c3"><use href="#c-abs"/></svg>
          <label class="lx">X:</label><div class="cbox"><span>0.0mm</span><i class="spin"></i></div>
          <label>Y:</label><div class="cbox"><span>317.931mm</span><i class="spin"></i></div>
          <label>Z:</label><div class="cbox"><span>0.0mm</span><i class="spin"></i></div>
          <span class="gridt">栅格 = 10.0mm</span>
        </div>
        <div class="c-bot">
          <span class="tagb"><svg><use href="#c-tag"/></svg></span><span class="tagt">添加时间标记</span>
        </div>
      </div>
      <div class="pb">
        <div class="pb-r">
          <svg><use href="#p-first"/></svg><i class="vb"></i><svg><use href="#p-prev"/></svg><svg class="big fly2"><use href="#p-play"/></svg><svg><use href="#p-next"/></svg><i class="vb"></i><svg><use href="#p-last"/></svg>
        </div>
        <div class="pb-r r2">
          <svg><use href="#p-keym"/></svg><i class="vb"></i><div class="fr"><span>0</span><i class="spin"></i></div><i class="vb"></i><svg><use href="#p-clock"/></svg>
        </div>
      </div>
      <div class="bigkey"><svg><use href="#p-key"/></svg></div>
      <div class="keys">
        <div class="kr"><span class="kb">自动</span><div class="kdd"><span>选定对象</span><i class="tri"></i></div></div>
        <div class="kr"><span class="kb">设置关键点</span><svg class="tan"><use href="#p-tan"/></svg><span class="kf">过滤器...</span></div>
      </div>
      <div class="nav">
        <svg><use href="#n-zoom"/></svg><svg><use href="#n-zooma"/></svg><svg><use href="#n-ext"/></svg><svg><use href="#n-exta"/></svg>
        <svg><use href="#n-fov"/></svg><svg><use href="#n-hand"/></svg><svg><use href="#n-orbit"/></svg><svg><use href="#n-max"/></svg>
      </div>
    </div>
  </footer>

  <div class="brand">SciArts</div>
</div>
</body>
</html>
```
FILE: styles.css
```css
* { box-sizing: border-box; }
html, body { margin: 0; padding: 0; width: 1920px; height: 1080px; overflow: hidden; background: #444; }
body { font-family: "Liberation Mono", "Noto Sans CJK SC", monospace; color: #d6d6d6; font-size: 15px; }
.defs { position: absolute; }
.app { position: relative; width: 1920px; height: 1080px; display: flex; flex-direction: column; overflow: hidden; }
i { display: block; font-style: normal; }
u { text-decoration: underline; text-underline-offset: 1px; }
sup { font-size: 10px; line-height: 0; vertical-align: 3px; }
.ictxt { font-family: "Liberation Sans", sans-serif; font-weight: 700; fill: #cfcfcf; }

.title { height: 29px; flex: none; background: #fff; display: flex; align-items: center; padding-left: 4px; }
.appicon { width: 17px; height: 20px; }
.appthree { font: 700 12px "Liberation Sans", sans-serif; fill: #fff; }
.title-t { margin-left: 6px; font: 15.800px "Noto Sans", "Noto Sans CJK SC", sans-serif; color: #111; letter-spacing: -.1px; }
.winctl { margin-left: auto; display: flex; margin-right: 2px; }
.wc { width: 58px; height: 29px; display: flex; align-items: center; justify-content: center; }
.wc svg { width: 12px; height: 12px; }

.menu { height: 26px; flex: none; background: linear-gradient(#505050, #454545); display: flex; align-items: center; padding-left: 13px; gap: 28px; font-size: 15.500px; color: #d2d2d2; border-bottom: 1px solid #2a2a2a; white-space: nowrap; }
.wide4 { letter-spacing: 1.700px; margin-left: 4px; }
.ml6 { margin-left: -7.500px; }
.civ { margin-left: 5px; }
.cust { margin-left: -2.500px; }
.wide2 { letter-spacing: 1.500px; margin-left: 2px; }
.arn { margin-left: -4px; }
.arn2 { margin-left: -2px; }
.login { width: 120px; height: 22px; background: #cdcdcd; display: flex; align-items: center; margin-left: 1px; padding: 0 6px; color: #222; font-size: 13px; }
.login svg { width: 16px; height: 16px; margin-right: 3px; }
.login .tri { margin-left: auto; }
.ws { margin-left: -3px; }
.wsd { width: 154px; height: 22px; margin-left: -25.500px; background: #565656; display: flex; align-items: center; padding: 0 5px; color: #b8b8b8; font-size: 14px; }
.wsd .tri { margin-left: auto; }
.tri { width: 0; height: 0; border-left: 4px solid transparent; border-right: 4px solid transparent; border-top: 6px solid #cfcfcf; flex: none; }
.tri.dark { border-top-color: #111; }
.tri.sm { border-left-width: 3px; border-right-width: 3px; border-top-width: 4px; }
.tri.sm2 { border-top-color: #bdbdbd; }

.tools { height: 42px; flex: none; background: #3f3f3f; display: flex; align-items: center; padding-left: 11px; }
.slot { width: 40px; height: 36px; flex: none; display: flex; align-items: center; justify-content: center; position: relative; }
.slot.n { width: 33px; }
.slot.on { background: #4d80c4; border-radius: 4px; margin: 0 1px; width: 38px; }
.ic { width: 30px; height: 30px; }
.fly::after { content: ""; position: absolute; right: 3px; bottom: 1px; border-left: 5px solid transparent; border-bottom: 5px solid #d5d5d5; }
.sep { width: 1px; height: 26px; background: #1e1e1e; margin: 0 4px 0 3px; flex: none; }
.sep.t { margin: 0 2px; }
.ml14 { margin-left: 14px; margin-right: 1px; }
.ml2 { margin-left: 2px; }
.ml3 { margin-left: 3px; }
.ml5 { margin-left: 5px; }
.dd { height: 21px; background: #5a5a5a; display: flex; align-items: center; padding: 0 8px 4px 5px; font-size: 14.500px; color: #c4c4c4; flex: none; margin-top: -8px; }
.dd .tri { margin-left: auto; margin-top: 2px; }
.w84 { width: 84px; } .w83 { width: 83px; } .w147 { width: 147px; padding-left: 2px; }

.main { height: 852px; flex: none; display: flex; }
.strip { width: 50px; flex: none; display: flex; flex-direction: column; align-items: center; padding-top: 10px; position: relative; background: #434343; }
.strip-fill { position: absolute; left: 0; right: 0; top: 10px; bottom: 2px; background: linear-gradient(90deg, #2a2a2a, #343434); border-right: 1px solid #111; }
.playbtn { position: relative; margin-top: auto; margin-bottom: 12px; margin-left: -1px; width: 24px; height: 24px; background: #4e4e4e; border-radius: 3px; display: flex; align-items: center; justify-content: center; }
.playbtn i { border-left: 7px solid #ddd; border-top: 5px solid transparent; border-bottom: 5px solid transparent; }
.tile { position: relative; width: 45px; height: 56px; margin-left: 5px; margin-bottom: 2px; background: linear-gradient(#4b6a96 85%, #3f84dc 85%); border-radius: 5px 0 0 4px; padding: 9px 3px 11px 4px; }
.tile div { height: 100%; background: #63708a; border: 1px solid #26334a; }

.scene { width: 339px; flex: none; background: #434343; display: flex; flex-direction: column; padding-left: 53px; }
.dots { height: 3px; margin-top: 3px; border-top: 1px dotted #888; }
.sc-menu { height: 29px; margin-top: 3px; display: flex; align-items: center; gap: 21px; padding-left: 16px; font-size: 15px; color: #cfcfcf; }
.sc-search { height: 30px; display: flex; align-items: center; padding-left: 4px; margin-top: 1px; position: relative; }
.sbox { width: 188px; height: 26px; border: 1px solid #5a5a5a; background: #414141; }
.xic { width: 14px; height: 14px; margin-left: 6px; }
.filt { width: 30px; height: 30px; margin-left: 11px; background: #4d88cc; display: flex; align-items: center; justify-content: center; }
.filt svg { width: 24px; height: 24px; }
.chev { color: #4b5070; font-size: 18px; font-weight: 700; margin-left: 13px; margin-top: -14px; font-family: "Liberation Sans", sans-serif; }
.sc-body { flex: 1; display: flex; min-height: 0; margin-top: 2px; }
.sc-side { width: 25px; flex: none; display: flex; flex-direction: column; gap: 3px; padding-top: 4px; }
.sc-side span { width: 24px; height: 24px; display: block; flex: none; }
.sc-side .b { background: #4d88cc; }
.sc-side svg { width: 24px; height: 24px; display: block; }
.sc-side .hr { height: 1px; background: #5c5c5c; margin: 1px 2px; }
.tbl { width: 254px; flex: none; border: 1px solid #393939; border-top: 0; margin-bottom: 2px; }
.th { height: 24px; display: flex; align-items: center; font-size: 15px; line-height: 22px; border: 1px solid #393939; border-left: 0; color: #d8d8d8; font-family: "Liberation Sans", "Noto Sans CJK SC", sans-serif; }
.th-n { padding-left: 5px; flex: 1; }
.up { border-left: 4px solid transparent; border-right: 4px solid transparent; border-bottom: 6px solid #ddd; margin-right: 5px; }
.th-f { width: 63px; padding-left: 4px; border-left: 1px solid #393939; height: 100%; }
.row { height: 22px; display: grid; grid-template-columns: 19px 20px 20px 130px 64px; align-items: center; color: #8d8d8d; font: 14px "Noto Sans", sans-serif; letter-spacing: -.1px; }
.tree { height: 100%; border-left: 1px solid #4c4c4c; margin-left: 10px; background: linear-gradient(#4c4c4c, #4c4c4c) left center / 6px 1px no-repeat; }
.eye { width: 18px; height: 18px; }
.eyeoff { width: 18px; height: 9px; border-radius: 50%; background: #2f2f2f; margin-top: -3px; }
.dot { width: 14px; height: 14px; border-radius: 50%; background: #dcdcdc; margin-left: 1px; margin-top: -2px; }
.nm { height: 100%; line-height: 22px; padding-left: 3px; background: #3f3f3f; }
.fz { height: 100%; background: #3f3f3f; display: flex; align-items: center; justify-content: center; color: #2a2a2a; border-left: 1px solid #4e4e4e; }
.fz svg { width: 16px; height: 16px; }
.row.alt .nm, .row.alt .fz { background: #4a4a4a; }
.row.vis { color: #e0e0e0; }
.row.vis .nm, .row.vis .fz { background: #484848; }
.row.vis .fz { color: #2c2c2c; }
.row.sel .nm, .row.sel .fz { background: #7b7b7b; }
.sc-foot { height: 31px; flex: none; display: flex; align-items: center; padding-left: 4px; position: relative; }
.layer { width: 181px; height: 26px; border: 1px solid #626262; color: #e6e620; font-size: 15px; line-height: 24px; padding-left: 1px; }
.sc-foot .tri { margin-left: 5px; }
.vline { width: 1px; height: 30px; background: #2d2d2d; margin-left: 8px; }
.lay { width: 22px; height: 22px; margin-left: 6px; }
.chev.f { margin-left: 34px; margin-top: -16px; }

.vp { width: 1283px; flex: none; position: relative; border: 2px solid #86703a; background: linear-gradient(#1e1d1c 0%, #2d2d2d 35%, #3c3c3c 65%, #4d4d4d 100%); margin-bottom: 1px; }
.vp-label { position: absolute; left: 4px; top: 7px; font-size: 11.500px; letter-spacing: -.4px; color: #c8c8c8; white-space: pre; z-index: 2; }
.scene3d { position: absolute; inset: 0; width: 100%; height: 100%; }
.plate-lo { fill: #ee6a94; }
.plate-up { fill: #df5f88; }
.hatch { stroke: #f4eaee; stroke-width: .9; fill: none; }
.wire { fill: none; stroke: #5fdbe2; stroke-width: 3; }
.wire2 { fill: none; stroke: #fff; stroke-width: .7; }
.ax { font: 15px "Liberation Sans", sans-serif; }
.ax2 { font: 12px "Liberation Sans", sans-serif; }

.cmd { flex: 1; background: #434343; display: flex; flex-direction: column; padding-left: 9px; min-width: 0; }
.tabs { display: flex; height: 37px; margin-top: 3px; }
.tabs span { width: 40px; display: flex; align-items: center; justify-content: center; background: #3d3d3d; border-radius: 3px 3px 0 0; }
.tabs span.on { background: #434343; width: 30px; margin-right: 4px; }
.tabs svg { width: 24px; height: 24px; }
.subt { display: flex; align-items: center; height: 34px; padding-left: 1px; }
.subt span { width: 30px; height: 28px; display: flex; align-items: center; justify-content: center; border-radius: 3px; }
.subt span.on { background: #4d88cc; width: 28px; margin-right: 1px; }
.subt svg { width: 24px; height: 24px; }
.cmb { width: 234px; height: 24px; margin-top: 4px; background: #5a5a5a; display: flex; align-items: center; padding: 0 8px; color: #c8c8c8; font-size: 15px; }
.cmb .tri { margin-left: auto; }
.roll { width: 223px; background: #4a4a4a; margin-top: 7px; border-radius: 2px; }
.r1 { height: 205px; }
.r2 { height: 68px; margin-top: 6px; }
.rh { height: 22px; display: flex; align-items: center; padding-left: 7px; font-size: 15px; }
.rh b { margin-left: 9px; color: #e8e8e8; font-weight: 700; font-size: 15.500px; }
.rh em { margin-left: auto; margin-right: 8px; width: 8px; height: 8px; background: repeating-linear-gradient(90deg, #7a7a7a 0 1px, transparent 1px 2px); }
.auto { height: 27px; display: flex; align-items: center; padding-left: 56px; color: #7f7f7f; font-size: 14.500px; }
.auto i { width: 13px; height: 13px; background: #525252; margin-right: 3px; }
.btns { display: grid; grid-template-columns: 91px 91px; column-gap: 5px; row-gap: 6.300px; padding-left: 18px; }
.btns span { height: 20px; background: #5a5a5a; border-radius: 3px; text-align: center; line-height: 20px; font-size: 14px; color: #cfcfcf; white-space: nowrap; }
.btns span.dis { color: #7d7d7d; background: #4f4f4f; }
.namec { display: flex; align-items: center; padding-left: 25px; margin-top: 10px; }
.ninput { width: 152px; height: 22px; background: #5c5c5c; padding-left: 3px; font-size: 14px; line-height: 22px; color: #c8c8c8; }
.swatch { width: 19px; height: 24px; background: #ee6490; border: 1px solid #222; margin-left: 5px; }

.bottom { flex: 1; background: #464646; display: flex; flex-direction: column; min-height: 0; position: relative; }
.slider { height: 32px; display: flex; align-items: center; gap: 2px; padding-left: 12px; flex: none; padding-top: 5px; }
.arrow { width: 18px; height: 21px; background: #5a5a5a; border-radius: 3px; text-align: center; line-height: 21px; color: #bdbdbd; font-size: 13px; }
.pos { width: 154px; height: 21px; background: #5d5d5d; border-radius: 3px; text-align: center; font-size: 14px; line-height: 21px; color: #c8c8c8; }
.track { height: 31px; margin-left: 10px; width: 1848px; background: #2c2c2c; border-top: 1px solid #111; display: flex; flex: none; margin-top: 1px; }
.tr-ic { width: 65px; flex: none; display: flex; align-items: center; padding-left: 17px; }
.tr-ic svg { width: 22px; height: 15px; }
.ruler { flex: 1; min-width: 0; position: relative; padding-left: 5px; background: repeating-linear-gradient(90deg, #707070 0 1px, transparent 1px 17.700px) 5px 0 / 100% 13px no-repeat; }
.thumb { position: absolute; left: 0; top: 1px; width: 10px; height: 28px; background: #7d6c20; }
.nums { display: grid; grid-template-columns: repeat(21, 88.500px); margin-left: -44px; padding-top: 11px; position: relative; }
.nums span { text-align: center; font: 14px "Liberation Sans", sans-serif; color: #a8a8a8; }
.status { flex: 1; display: flex; min-height: 0; }
.prev { width: 122px; margin: 5px 0 3px 5px; flex: none; display: flex; flex-direction: column; }
.pk { height: 33px; background: #e2c6c4; border: 1px solid #888; }
.wh { height: 26px; background: #fff; border: 1px solid #777; color: #14246a; font-size: 13px; line-height: 22px; padding-left: 4px; white-space: nowrap; }
.msg { width: 648px; flex: none; display: flex; flex-direction: column; padding: 12px 0 0 4px; gap: 12px; font-size: 15px; line-height: 19px; color: #d0d0d0; border-left: 1px solid #2a2a2a; margin-left: 5px; white-space: pre; }
.coords { width: 550px; flex: none; display: flex; flex-direction: column; }
.c-top { height: 35px; display: flex; align-items: center; font-size: 14px; padding-left: 2px; padding-top: 6px; }
.c1, .c2, .c3 { width: 22px; height: 22px; flex: none; }
.c2 { margin-left: 11px; }
.c3 { margin-left: 12px; }
.c-top label { width: 19px; text-align: center; margin-left: 1px; flex: none; }
.c-top .lx { margin-left: 8px; }
.cbox { width: 84px; height: 21px; background: #5e5e5e; display: flex; align-items: center; padding-left: 4px; color: #c8c8c8; overflow: hidden; flex: none; font-size: 14px; }
.cbox span { flex: 1; white-space: nowrap; overflow: hidden; }
.spin { width: 8px; height: 14px; margin: 0 2px; flex: none; background: linear-gradient(135deg, transparent 50%, #b5b5b5 50%) 0 0 / 4px 6px no-repeat, linear-gradient(-135deg, transparent 50%, #b5b5b5 50%) 4px 0 / 4px 6px no-repeat, linear-gradient(45deg, transparent 50%, #b5b5b5 50%) 0 8px / 4px 6px no-repeat, linear-gradient(-45deg, transparent 50%, #b5b5b5 50%) 4px 8px / 4px 6px no-repeat; }
.gridt { margin-left: 9px; white-space: nowrap; }
.c-bot { display: flex; align-items: center; padding-left: 390px; height: 28px; }
.tagb { width: 26px; height: 25px; background: #4d80c4; border-radius: 4px; display: flex; align-items: center; justify-content: center; }
.tagb svg { width: 20px; height: 20px; }
.tagt { margin-left: 4px; font-size: 14.500px; white-space: nowrap; color: #cfcfcf; }
.pb { width: 164px; flex: none; display: flex; flex-direction: column; padding: 6px 0 0 8px; }
.pb-r { display: flex; align-items: center; height: 25px; gap: 5px; }
.pb-r svg { width: 20px; height: 20px; flex: none; }
.pb-r .big { width: 24px; height: 24px; }
.pb-r.r2 { margin-top: 1px; }
.vb { width: 1px; height: 22px; background: #1e1e1e; flex: none; }
.fr { width: 82px; height: 21px; background: #5e5e5e; display: flex; align-items: center; padding-left: 5px; font-size: 14px; color: #bbb; }
.fr span { flex: 1; }
.bigkey { width: 50px; height: 54px; background: #5a5a5a; border-radius: 4px; margin: 5px 0 0 2px; flex: none; display: flex; align-items: center; justify-content: center; }
.bigkey svg { width: 44px; height: 44px; }
.keys { width: 230px; flex: none; padding: 5px 0 0 5px; display: flex; flex-direction: column; gap: 4px; }
.kr { display: flex; align-items: center; height: 24px; }
.kb { width: 80px; height: 24px; background: #5c5c5c; border-radius: 3px; text-align: center; line-height: 24px; font-size: 14px; color: #d0d0d0; flex: none; white-space: nowrap; }
.kdd { width: 139px; height: 21px; margin-left: 7px; background: #5a5a5a; display: flex; align-items: center; padding: 0 8px; font-size: 14.500px; color: #cfcfcf; margin-top: -3px; }
.kdd .tri { margin-left: auto; }
.tan { width: 22px; height: 22px; margin-left: 8px; }
.kf { width: 106px; height: 24px; background: #5c5c5c; border-radius: 3px; text-align: center; line-height: 24px; margin-left: 8px; font-size: 14.500px; color: #d0d0d0; }
.nav { flex: 1; display: grid; grid-template-columns: repeat(4, 28px); grid-auto-rows: 27px; padding: 5px 0 0 18px; align-items: center; justify-items: center; }
.nav svg { width: 22px; height: 22px; }

.brand { position: absolute; left: 1514px; top: 833px; font: 400 130px/1.100 "Lato", sans-serif; color: #c9c6ea; transform: scaleX(.91); transform-origin: left top; white-space: nowrap; pointer-events: none; }
```
